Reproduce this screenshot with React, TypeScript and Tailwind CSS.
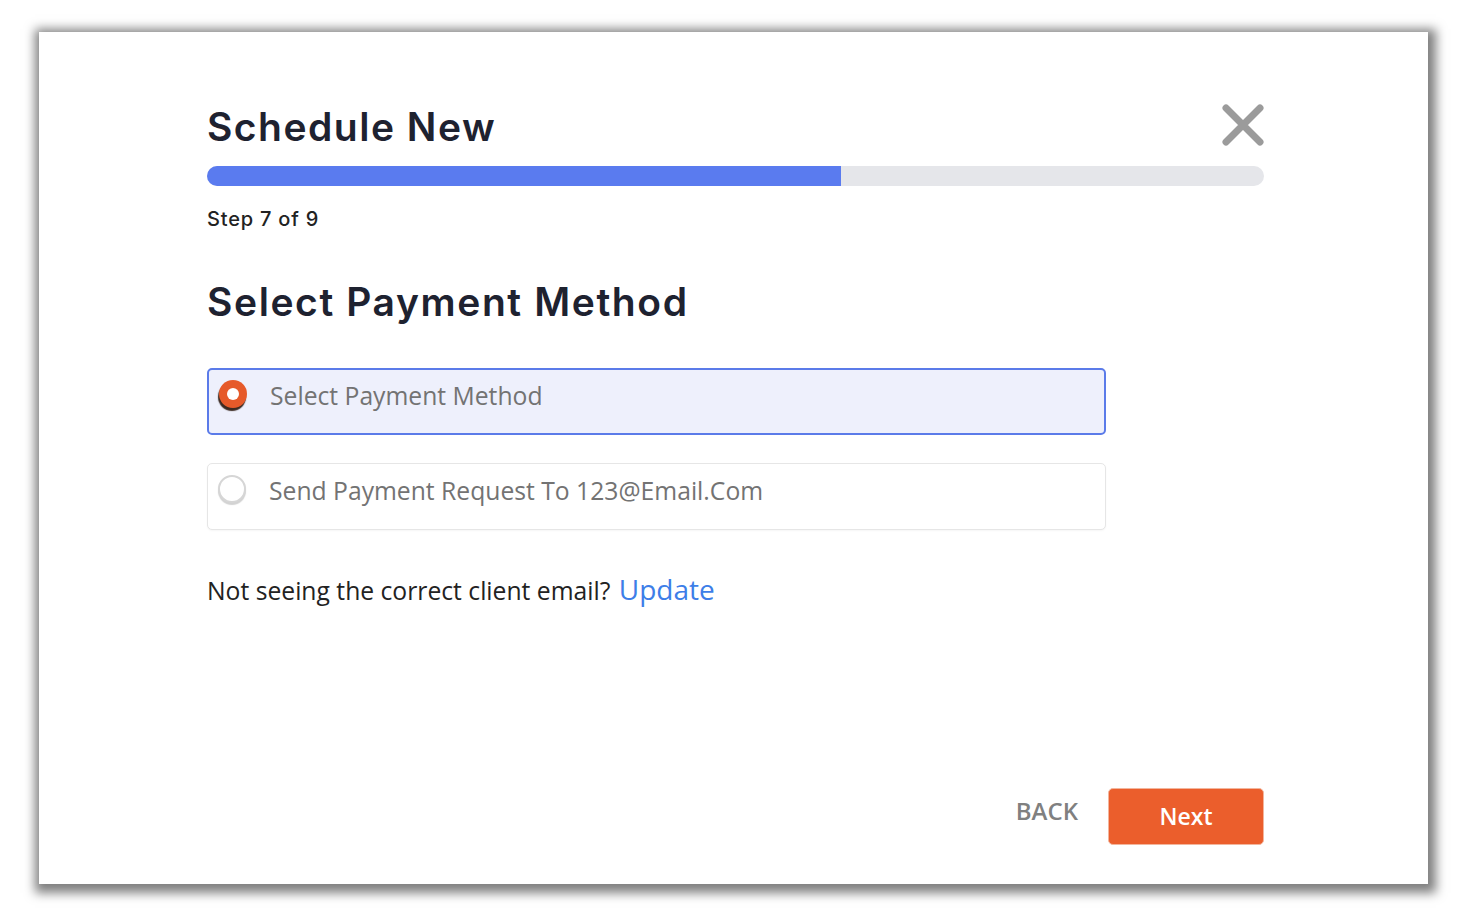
import React from "react";

// Titoli in stile Montserrat (sostituito con Inter), testi in Open Sans
const heading = "font-['Inter',sans-serif]";
const body = "font-['Open_Sans',sans-serif]";

const CloseIcon: React.FC = () => (
  <svg width="42" height="42" viewBox="0 0 42 42" aria-hidden="true">
    <path
      d="M4 4 L38 38 M38 4 L4 38"
      stroke="#9b9b9b"
      strokeWidth="7"
      strokeLinecap="round"
    />
  </svg>
);

interface OptionProps {
  label: string;
  checked: boolean;
}

const PaymentOption: React.FC<OptionProps> = ({ label, checked }) => (
  <div
    className={
      checked
        ? "w-[899px] h-[67px] rounded-[5px] border-2 border-[#5b7be9] bg-[#eef0fc] pl-[10px] pt-[8px]"
        : "w-[899px] h-[67px] rounded-[5px] border border-[#e6e6e6] bg-white pl-[10px] pt-[9px] shadow-[0_1px_2px_rgba(0,0,0,0.04)]"
    }
  >
    <div className="flex h-[32px] items-center gap-[23px]">
      {checked ? (
        <span className="flex h-[28px] w-[28px] items-center justify-center rounded-full bg-[#e65a2a] shadow-[-1px_3px_1px_rgba(40,20,10,0.9)]">
          <span className="h-[12px] w-[12px] rounded-full bg-white" />
        </span>
      ) : (
        <span className="h-[28px] w-[28px] rounded-full border-2 border-[#d6d6d6] bg-white shadow-[0_2px_1px_rgba(0,0,0,0.18)]" />
      )}
      <span
        className={`${body} mt-[3px] text-[24.7px] leading-[32px] text-[#737373]`}
      >
        {label}
      </span>
    </div>
  </div>
);

const App: React.FC = () => {
  const step = 7;
  const total = 9;

  return (
    <div className="min-h-screen w-full bg-white pl-[39px] pt-[32px]">
      <div className="flex h-[852px] w-[1389px] flex-col bg-white px-[164px] pl-[168px] pb-[39px] pt-[71px] shadow-[2px_3px_10px_6px_rgba(0,0,0,0.5)]">
        {/* Intestazione */}
        <div className="flex items-start justify-between">
          <h1
            className={`${heading} text-[39px] font-semibold leading-[48px] tracking-[1.5px] text-[#1e2230]`}
          >
            Schedule New
          </h1>
          <button type="button" className="mt-[1px]">
            <CloseIcon />
          </button>
        </div>

        {/* Barra di avanzamento */}
        <div className="mt-[15px] h-[20px] w-full overflow-hidden rounded-full bg-[#e5e6ea]">
          <div
            className="h-full bg-[#5a7bef]"
            style={{ width: `${(step / total) * 100 - 17.8}%` }}
          />
        </div>
        <p
          className={`${heading} mt-[19px] text-[20px] font-medium leading-[28px] tracking-[0.8px] text-[#222]`}
        >
          Step {step} of {total}
        </p>

        <h2
          className={`${heading} mt-[45px] text-[39px] font-semibold leading-[48px] tracking-[1.6px] text-[#1e2230]`}
        >
          Select Payment Method
        </h2>

        {/* Opzioni */}
        <div className="mt-[42px] flex flex-col gap-[28px]">
          <PaymentOption label="Select Payment Method" checked />
          <PaymentOption label="Send Payment Request To 123@Email.Com" checked={false} />
        </div>

        <p className={`${body} mt-[43px] text-[24.7px] leading-[32px] text-[#222]`}>
          Not seeing the correct client email?{" "}
          <a href="#" className="ml-[2px] text-[28px] leading-[32px] text-[#3d7ee8]">
            Update
          </a>
        </p>

        {/* Bottoni */}
        <div className="mt-auto flex items-center justify-end gap-[30px]">
          <button
            type="button"
            className={`${body} pb-[12px] text-[24px] font-semibold leading-[32px] text-[#808080]`}
          >
            BACK
          </button>
          <button
            type="button"
            className={`${body} h-[57px] w-[156px] rounded-[5px] border border-[#f3b59c] bg-[#eb5e2c] text-[23px] font-semibold text-white`}
          >
            Next
          </button>
        </div>
      </div>
    </div>
  );
};

export default App;
